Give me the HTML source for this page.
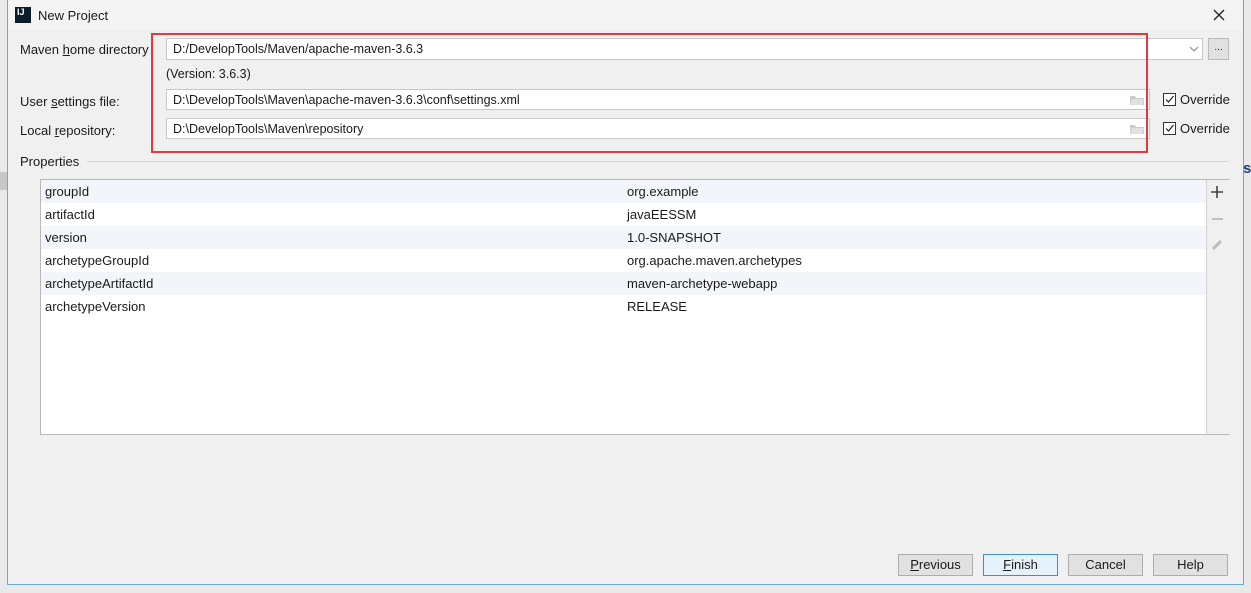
<!DOCTYPE html>
<html><head><style>
body{margin:0;width:1251px;height:593px;background:#e9e9e9;position:relative;overflow:hidden;font-family:"Liberation Sans",sans-serif;font-size:13px;color:#1a1a1a}
.a{position:absolute}
.dlg{left:7px;top:0;width:1235px;height:584px;background:#f0f0f0;border:1px solid #6fa8d6;border-top:none}
.field{position:absolute;background:#fff;border:1px solid #c8c8c8;height:20px;box-sizing:border-box;padding:3px 0 0 6px;font-size:12.5px}
.row{position:absolute;left:41px;width:1165px;height:23px}
.row span{position:absolute;top:4px}
.btn{position:absolute;top:554px;height:22px;width:75px;box-sizing:border-box;border:1px solid #adadad;background:#e1e1e1;text-align:center;line-height:20px;font-size:13px}
</style></head><body>
<div class="a" style="left:0;top:172px;width:7px;height:18px;background:#c8c8c8"></div>
<div class="a" style="left:1243px;top:160px;color:#1d3c8a;font-weight:bold;font-size:15px">s</div>
<div class="a dlg"></div>
<div class="a" style="left:8px;top:0;width:1234px;height:30px;background:#f4f4f4"></div>
<div class="a" style="left:15px;top:7px;width:16px;height:16px;background:#0b1d2d;color:#fff;font-size:9px;font-weight:bold;line-height:10px;padding-left:2px;box-sizing:border-box">IJ</div>
<div class="a" style="left:38px;top:8px;font-size:13px">New Project</div>
<svg class="a" style="left:1213px;top:9px" width="12" height="12"><path d="M1 1L11 11M11 1L1 11" stroke="#222" stroke-width="1.3"/></svg>

<div class="a" style="left:20px;top:42px">Maven <u>h</u>ome directory</div>
<div class="field" style="left:166px;top:38px;width:1037px;height:22px">D:/DevelopTools/Maven/apache-maven-3.6.3</div>
<svg class="a" style="left:1189px;top:46px" width="10" height="6"><path d="M1 1L5 5L9 1" stroke="#888" fill="none"/></svg>
<div class="a" style="left:1208px;top:38px;width:21px;height:22px;box-sizing:border-box;border:1px solid #bbb;background:#e1e1e1;text-align:center;font-size:10px;line-height:18px">...</div>
<div class="a" style="left:166px;top:67px;font-size:12.5px">(Version: 3.6.3)</div>

<div class="a" style="left:20px;top:94px">User <u>s</u>ettings file:</div>
<div class="field" style="left:166px;top:89px;width:984px;height:21px">D:\DevelopTools\Maven\apache-maven-3.6.3\conf\settings.xml</div>
<svg class="a" style="left:1129px;top:94px" width="16" height="12"><path d="M1 2h5l1 2h8v7H1z" fill="#c9ccce"/><path d="M3 5h12l-2 6H1z" fill="#dfe1e2"/></svg>
<svg class="a" style="left:1163px;top:93px" width="13" height="13"><rect x=".5" y=".5" width="12" height="12" fill="#fff" stroke="#333"/><path d="M3 6.5L5.5 9L10.5 3" stroke="#222" fill="none" stroke-width="1.2"/></svg>
<div class="a" style="left:1180px;top:92px">Override</div>

<div class="a" style="left:20px;top:123px">Local <u>r</u>epository:</div>
<div class="field" style="left:166px;top:118px;width:984px;height:21px">D:\DevelopTools\Maven\repository</div>
<svg class="a" style="left:1129px;top:123px" width="16" height="12"><path d="M1 2h5l1 2h8v7H1z" fill="#c9ccce"/><path d="M3 5h12l-2 6H1z" fill="#dfe1e2"/></svg>
<svg class="a" style="left:1163px;top:122px" width="13" height="13"><rect x=".5" y=".5" width="12" height="12" fill="#fff" stroke="#333"/><path d="M3 6.5L5.5 9L10.5 3" stroke="#222" fill="none" stroke-width="1.2"/></svg>
<div class="a" style="left:1180px;top:121px">Override</div>

<div class="a" style="left:151px;top:33px;width:993px;height:116px;border:2px solid #e0393e"></div>

<div class="a" style="left:20px;top:154px">Properties</div>
<div class="a" style="left:87px;top:161px;width:1141px;height:1px;background:#d4d4d4"></div>

<div class="a" style="left:40px;top:179px;width:1190px;height:256px;border:1px solid #b8b8b8;background:#fff;box-sizing:border-box"></div>
<div class="a" style="left:1206px;top:180px;width:23px;height:254px;background:#f0f0f0;border-left:1px solid #d0d0d0"></div>
<svg class="a" style="left:1211px;top:186px" width="12" height="12"><path d="M6 0v12M0 6h12" stroke="#444" stroke-width="1.6"/></svg>
<svg class="a" style="left:1212px;top:218px" width="11" height="2"><path d="M0 1h11" stroke="#aaa" stroke-width="1.4"/></svg>
<svg class="a" style="left:1211px;top:238px" width="13" height="13"><path d="M2 11L10 3" stroke="#bbb" stroke-width="3"/></svg>

<div class="row" style="top:180px;background:#f2f5f9"><span style="left:4px">groupId</span><span style="left:586px">org.example</span></div>
<div class="row" style="top:203px"><span style="left:4px">artifactId</span><span style="left:586px">javaEESSM</span></div>
<div class="row" style="top:226px;background:#f2f5f9"><span style="left:4px">version</span><span style="left:586px">1.0-SNAPSHOT</span></div>
<div class="row" style="top:249px"><span style="left:4px">archetypeGroupId</span><span style="left:586px">org.apache.maven.archetypes</span></div>
<div class="row" style="top:272px;background:#f2f5f9"><span style="left:4px">archetypeArtifactId</span><span style="left:586px">maven-archetype-webapp</span></div>
<div class="row" style="top:295px"><span style="left:4px">archetypeVersion</span><span style="left:586px">RELEASE</span></div>

<div class="btn" style="left:898px"><u>P</u>revious</div>
<div class="btn" style="left:983px;border-color:#3c8fcf;background:#e5f1fb"><u>F</u>inish</div>
<div class="btn" style="left:1068px">Cancel</div>
<div class="btn" style="left:1153px">Help</div>
</body></html>
